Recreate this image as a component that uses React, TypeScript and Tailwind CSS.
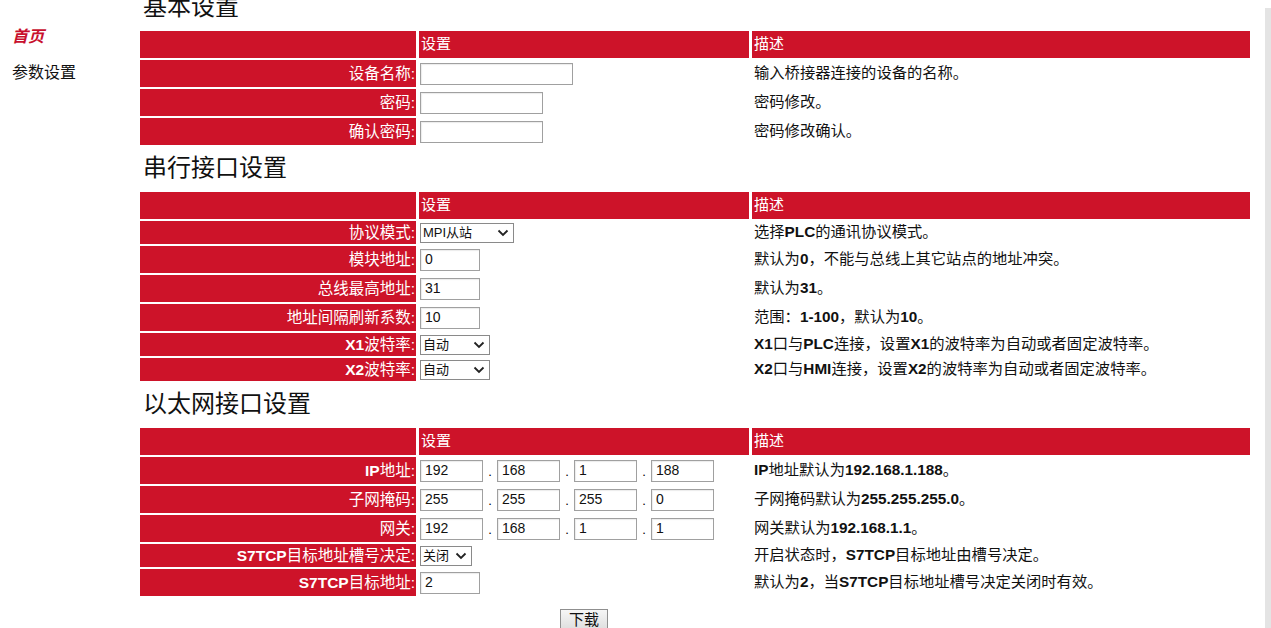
import { ReactNode } from "react";

const RED = "bg-[#cd1329]";

// Latin runs in the source page render heavier than the CJK around them
function Mixed({ text }: { text: string }) {
  const parts = text.split(/([A-Za-z0-9][A-Za-z0-9.\-]*)/);
  return (
    <>
      {parts.map((p, i) =>
        i % 2 === 1 ? (
          <span key={i} className="font-bold">
            {p}
          </span>
        ) : (
          <span key={i}>{p}</span>
        )
      )}
    </>
  );
}

function TextBox({ value = "", width }: { value?: string; width: string }) {
  return (
    <div
      className={`${width} h-[22px] border border-[#a0a0a0] bg-white px-[4px] flex items-center text-[14px] text-[#111] shadow-[inset_1px_1px_1px_rgba(0,0,0,0.08)]`}
    >
      {value}
    </div>
  );
}

function Select({ value, width }: { value: string; width: string }) {
  return (
    <div
      className={`${width} h-[20px] border border-[#8a8a8a] bg-white pl-[2px] pr-[4px] flex items-center justify-between text-[13px] text-[#111]`}
    >
      <span>{value}</span>
      <svg width="12" height="8" viewBox="0 0 12 8" fill="none">
        <path d="M1.5 1.5 L6 6 L10.5 1.5" stroke="#222" strokeWidth="1.8" />
      </svg>
    </div>
  );
}

function IpBoxes({ parts }: { parts: string[] }) {
  return (
    <div className="flex items-center">
      {parts.map((p, i) => (
        <div key={i} className="flex items-center">
          {i > 0 && <span className="w-[14px] text-center text-[13px] pt-[3px]">.</span>}
          <TextBox value={p} width="w-[63px]" />
        </div>
      ))}
    </div>
  );
}

type Row = { label: string; control: ReactNode; desc: string; short?: boolean };

function Section({ title, rows, first }: { title: string; rows: Row[]; first?: boolean }) {
  return (
    <div className={first ? "-mt-[8px]" : "mt-[8px]"}>
      <h2 className="h-[30px] leading-[30px] pl-[3px] text-[24px] text-[#111] font-normal mb-[9px]">
        {title}
      </h2>
      <div className="grid grid-cols-[276px_330px_498px] gap-x-[3px] gap-y-[2px]">
        <div className={`${RED} h-[27px]`} />
        <div className={`${RED} h-[27px] pl-[2px] flex items-center text-white`}>设置</div>
        <div className={`${RED} h-[27px] pl-[2px] flex items-center text-white`}>描述</div>
        {rows.map((r) => (
          <div key={r.label} className="contents">
            <div
              className={`${RED} ${r.short ? "h-[23px]" : "h-[27px]"} pr-[1px] flex items-center justify-end text-white text-[15.5px]`}
            >
              <Mixed text={r.label} />:
            </div>
            <div className="flex items-center pl-[1px]">{r.control}</div>
            <div className="flex items-center pl-[2px] text-[#111] text-[15.3px]">
              <Mixed text={r.desc} />
            </div>
          </div>
        ))}
      </div>
    </div>
  );
}

export default function App() {
  return (
    <div
      className="flex h-[628px] w-[1271px] overflow-hidden bg-white text-[15px]"
      style={{ fontFamily: '"Liberation Sans", "Noto Sans CJK SC", sans-serif' }}
    >
      <nav className="w-[140px] shrink-0 pl-[12px] pt-[26px]">
        <div className="text-[16px] italic font-bold text-[#c8102e] h-[22px] leading-[22px]">首页</div>
        <div className="text-[16px] text-[#111] mt-[14px] h-[22px] leading-[22px]">参数设置</div>
      </nav>

      <main className="w-[1110px] shrink-0">
        <Section
          first
          title="基本设置"
          rows={[
            { label: "设备名称", control: <TextBox width="w-[153px]" />, desc: "输入桥接器连接的设备的名称。" },
            { label: "密码", control: <TextBox width="w-[123px]" />, desc: "密码修改。" },
            { label: "确认密码", control: <TextBox width="w-[123px]" />, desc: "密码修改确认。" },
          ]}
        />
        <Section
          title="串行接口设置"
          rows={[
            { label: "协议模式", short: true, control: <Select value="MPI从站" width="w-[94px]" />, desc: "选择PLC的通讯协议模式。" },
            { label: "模块地址", control: <TextBox value="0" width="w-[60px]" />, desc: "默认为0，不能与总线上其它站点的地址冲突。" },
            { label: "总线最高地址", control: <TextBox value="31" width="w-[60px]" />, desc: "默认为31。" },
            { label: "地址间隔刷新系数", control: <TextBox value="10" width="w-[60px]" />, desc: "范围：1-100，默认为10。" },
            { label: "X1波特率", short: true, control: <Select value="自动" width="w-[70px]" />, desc: "X1口与PLC连接，设置X1的波特率为自动或者固定波特率。" },
            { label: "X2波特率", short: true, control: <Select value="自动" width="w-[70px]" />, desc: "X2口与HMI连接，设置X2的波特率为自动或者固定波特率。" },
          ]}
        />
        <Section
          title="以太网接口设置"
          rows={[
            { label: "IP地址", control: <IpBoxes parts={["192", "168", "1", "188"]} />, desc: "IP地址默认为192.168.1.188。" },
            { label: "子网掩码", control: <IpBoxes parts={["255", "255", "255", "0"]} />, desc: "子网掩码默认为255.255.255.0。" },
            { label: "网关", control: <IpBoxes parts={["192", "168", "1", "1"]} />, desc: "网关默认为192.168.1.1。" },
            { label: "S7TCP目标地址槽号决定", short: true, control: <Select value="关闭" width="w-[52px]" />, desc: "开启状态时，S7TCP目标地址由槽号决定。" },
            { label: "S7TCP目标地址", control: <TextBox value="2" width="w-[60px]" />, desc: "默认为2，当S7TCP目标地址槽号决定关闭时有效。" },
          ]}
        />
        <div className="grid grid-cols-[276px_330px_498px] gap-x-[3px] mt-[13px]">
          <div className="col-start-2 flex justify-center">
            <button className="w-[48px] h-[22px] border border-[#8f8f8f] bg-gradient-to-b from-[#f6f6f6] to-[#dedede] text-[15px] text-[#111] leading-[20px]">
              下载
            </button>
          </div>
        </div>
      </main>

      <div className="ml-auto mt-[8px] w-[6px] bg-[#e4e4e4]" />
    </div>
  );
}
